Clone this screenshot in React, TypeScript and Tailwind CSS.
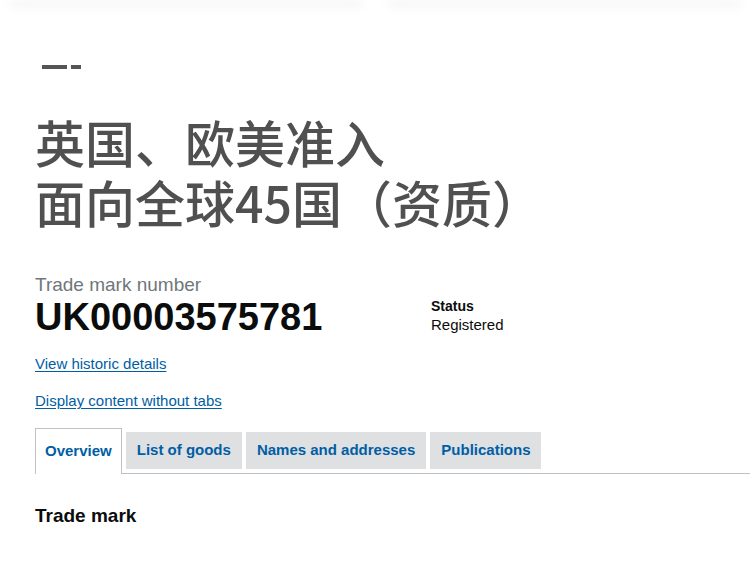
import React from "react";

export default function App() {
  const tabs = ["List of goods", "Names and addresses", "Publications"];
  return (
    <div className="min-h-[569px] bg-white font-['Liberation_Sans',Arial,sans-serif] text-[#0b0c0c] overflow-hidden">
      <div className="flex h-[16px] gap-[24px] px-[8px]">
        <div className="h-[12px] flex-1 rounded-b-[12px] bg-gradient-to-b from-[#f3f3f3] to-white blur-[4px]" />
        <div className="h-[12px] flex-1 rounded-b-[12px] bg-gradient-to-b from-[#f3f3f3] to-white blur-[4px]" />
      </div>
      <main className="pl-[35px]">
        <div className="mt-[49px] ml-[7px] flex gap-[4px]">
          <div className="h-[4px] w-[25px] bg-[#555555]" />
          <div className="h-[4px] w-[10px] bg-[#555555]" />
        </div>
        <h1 className="mt-[42px] font-['Noto_Sans_CJK_SC',sans-serif] text-[50px] font-medium leading-[60px] text-[#505050]">
          <div>英国、欧美准入</div>
          <div>面向全球45国（资质）</div>
        </h1>
        <div className="mt-[42px] flex">
          <div className="w-[396px]">
            <div className="text-[19px] leading-[24px] text-[#6f777b]">Trade mark number</div>
            <div className="text-[38px] font-bold leading-[40px]">UK00003575781</div>
          </div>
          <div className="pt-[24px]">
            <div className="text-[14px] font-bold leading-[18px]">Status</div>
            <div className="text-[15px] leading-[20px]">Registered</div>
          </div>
        </div>
        <div className="mt-[17px] flex flex-col items-start gap-[17px] text-[15px] leading-[20px] text-[#005ea5]">
          <a href="#" className="underline underline-offset-[2px]">View historic details</a>
          <a href="#" className="underline underline-offset-[2px]">Display content without tabs</a>
        </div>
        <ul className="mt-[17px] flex items-start gap-[4px] border-b border-[#bfc1c3]">
          <li className="-mb-px flex h-[46px] items-center border border-b-0 border-[#bfc1c3] bg-white px-[9px] text-[15px] font-bold text-[#005ea5]">
            Overview
          </li>
          {tabs.map((t) => (
            <li
              key={t}
              className="mt-[4px] flex h-[37px] items-center bg-[#dee0e2] px-[11px] text-[15px] font-bold text-[#005ea5]"
            >
              {t}
            </li>
          ))}
        </ul>
        <h2 className="mt-[30px] text-[19px] font-bold leading-[24px]">Trade mark</h2>
      </main>
    </div>
  );
}
